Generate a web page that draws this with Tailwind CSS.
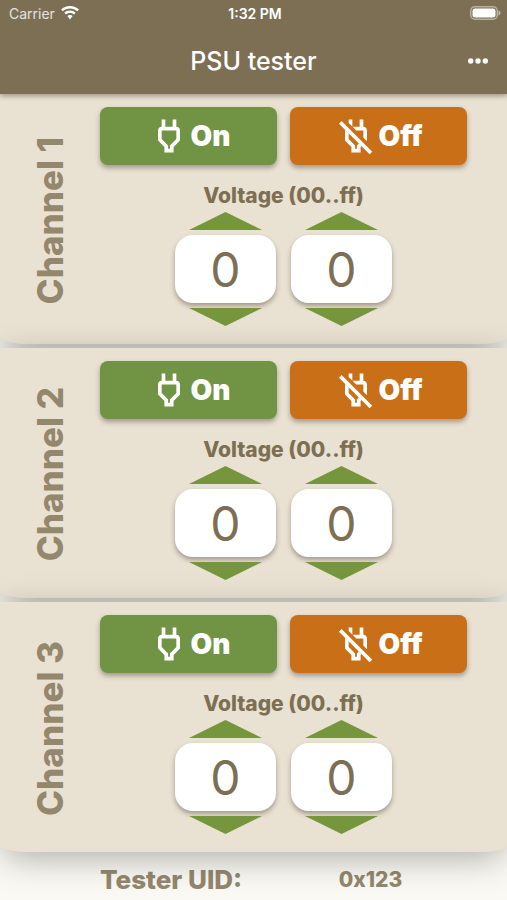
<!DOCTYPE html>
<html lang="en">
<head>
<meta charset="utf-8">
<meta name="viewport" content="width=device-width, initial-scale=1">
<title>PSU tester</title>
<script src="https://cdn.jsdelivr.net/npm/@tailwindcss/browser@4"></script>
</head>
<body class="min-h-screen overflow-x-hidden bg-[#faf9f3] font-[Inter,'Liberation_Sans',sans-serif] text-[#7d6f54]">
<svg class="hidden" aria-hidden="true">
  <symbol id="plug" viewBox="0 0 24 24"><path d="M16 9v4.66l-3.5 3.51V19h-1v-1.83L8 13.65V9h8m0-6h-2v4h-4V3H8v4h-.01C6.9 6.99 6 7.89 6 8.98v5.52L9.5 18v3h5v-3l3.5-3.51V9c0-1.1-.9-2-2-2V3z"/></symbol>
  <symbol id="plug-off" viewBox="0 0 24 24"><path d="M10 3H8v1.880l2 2zM16 9v3.880l1.800 1.800.2-.2V9c0-1.100-.9-2-2-2V3h-2v4h-3.880l2 2H16zM8 10.540v3.110l3.500 3.520V19h1v-1.830l1.070-1.060 1.410 1.410-.48.480v3h-5v-3L6 14.500V8.540z"/><path d="M4.120 3.840L2.710 5.250 19.450 21.990 20.860 20.580z"/></symbol>
  <symbol id="up" viewBox="0 0 73 18"><path d="M0 18L36.500 0L73 18z"/></symbol>
  <symbol id="down" viewBox="0 0 73 18"><path d="M0 0L36.500 18L73 0z"/></symbol>
</svg>

<header class="relative z-10 bg-[#7d6f54] text-white shadow-[0_2px_5px_rgba(70,50,40,0.45)]">
  <div class="grid h-7 grid-cols-3 items-center pr-[6px] pb-[2px] pl-[9px] text-[14px]">
    <div class="flex items-center gap-[6px] text-white/80">
      <span>Carrier</span>
      <svg class="h-[14px] w-[18px] fill-white" viewBox="0 0 18 14" aria-label="Wi-Fi"><path d="M9 0C5.500 0 2.400 1.300 0 3.500L1.700 5.300C3.600 3.500 6.200 2.400 9 2.400s5.400 1.100 7.300 2.900L18 3.500C15.600 1.300 12.500 0 9 0zM9 4.500c-2.200 0-4.200.8-5.700 2.200L5 8.500c1-.95 2.400-1.500 4-1.500s3 .55 4 1.500l1.700-1.800C13.200 5.300 11.200 4.500 9 4.500zM9 9c-1 0-1.900.35-2.600.95L9 13.500l2.600-3.550C10.900 9.350 10 9 9 9z"/></svg>
    </div>
    <div class="text-center font-semibold">1:32 PM</div>
    <svg class="h-[14px] w-[31px] justify-self-end" viewBox="0 0 31 14" aria-label="Battery full"><rect x=".75" y=".75" width="26.500" height="12.500" rx="4" fill="none" stroke="#fff" stroke-opacity=".45" stroke-width="1.500"/><rect x="2.500" y="2.500" width="23" height="9" rx="2.500" fill="#fff"/><path d="M28.500 4.500c1.300.4 2 1.300 2 2.500s-.7 2.100-2 2.500z" fill="#fff" fill-opacity=".5"/></svg>
  </div>
  <div class="grid h-[66px] grid-cols-[40px_1fr_40px] items-center px-[9px]">
    <h1 class="col-start-2 text-center text-[25px] leading-9 font-medium">PSU tester</h1>
    <button type="button" aria-label="More options" class="flex h-10 items-center justify-center"><svg class="h-[6px] w-5 fill-white" viewBox="0 0 20 6"><circle cx="2.700" cy="3" r="2.700"/><circle cx="10" cy="3" r="2.700"/><circle cx="17.300" cy="3" r="2.700"/></svg></button>
  </div>
</header>

<main id="channels" class="flex flex-col gap-1"></main>

<footer class="flex items-center pt-[10px] pr-10 pb-[2px] pl-[100px] font-extrabold text-[#93876e]">
  <div class="flex-1 text-[26px] leading-9">Tester UID:</div>
  <div class="w-[193px] text-center text-[21px]">0x123</div>
</footer>

<template id="channel">
  <section class="relative flex rounded-b-[28px_7px] bg-[#e9e2d2] pt-[13px] pb-[18px] shadow-[0_8px_36px_-4px_rgba(0,0,0,0.34)]">
    <div class="flex w-[100px] shrink-0 items-center justify-center pt-2">
      <h2 class="rotate-180 text-[35px] leading-10 font-extrabold whitespace-nowrap text-[#93876e] [writing-mode:vertical-rl]"></h2>
    </div>
    <div class="flex-1 pr-10">
      <div class="grid grid-cols-2 gap-[13px] text-[28px] font-black text-white">
        <button type="button" class="flex h-[58px] items-center justify-center rounded-lg bg-[#709443] shadow-[0_3px_5px_rgba(60,45,40,0.4)]"><svg class="size-11 fill-current"><use href="#plug"/></svg>On</button>
        <button type="button" class="flex h-[58px] items-center justify-center rounded-lg bg-[#c86f18] shadow-[0_3px_5px_rgba(60,45,40,0.4)]"><svg class="size-11 fill-current"><use href="#plug-off"/></svg>Off</button>
      </div>
      <fieldset class="pt-4">
        <legend class="contents"><span class="block text-center text-[21px] leading-[30px] font-extrabold">Voltage (00..ff)</span></legend>
        <div class="flex justify-center gap-[15px] pt-px">
          <div class="flex w-[101px] flex-col items-center">
            <button type="button" aria-label="Increase high digit"><svg class="block h-[18px] w-[73px] fill-[#75963d]"><use href="#up"/></svg></button>
            <input type="text" aria-label="High digit" value="0" class="mt-[5px] mb-[5px] h-[68px] w-full rounded-[18px] bg-white text-center text-5xl shadow-[0_3px_5px_rgba(60,45,40,0.4)]">
            <button type="button" aria-label="Decrease high digit"><svg class="block h-[18px] w-[73px] fill-[#75963d]"><use href="#down"/></svg></button>
          </div>
          <div class="flex w-[101px] flex-col items-center">
            <button type="button" aria-label="Increase low digit"><svg class="block h-[18px] w-[73px] fill-[#75963d]"><use href="#up"/></svg></button>
            <input type="text" aria-label="Low digit" value="0" class="mt-[5px] mb-[5px] h-[68px] w-full rounded-[18px] bg-white text-center text-5xl shadow-[0_3px_5px_rgba(60,45,40,0.4)]">
            <button type="button" aria-label="Decrease low digit"><svg class="block h-[18px] w-[73px] fill-[#75963d]"><use href="#down"/></svg></button>
          </div>
        </div>
      </fieldset>
    </div>
  </section>
</template>
<script>
  const list = document.getElementById('channels');
  const template = document.getElementById('channel');
  for (const n of [1, 2, 3]) {
    const card = template.content.cloneNode(true);
    card.querySelector('h2').textContent = `Channel ${n}`;
    list.append(card);
  }
</script>
</body>
</html>
